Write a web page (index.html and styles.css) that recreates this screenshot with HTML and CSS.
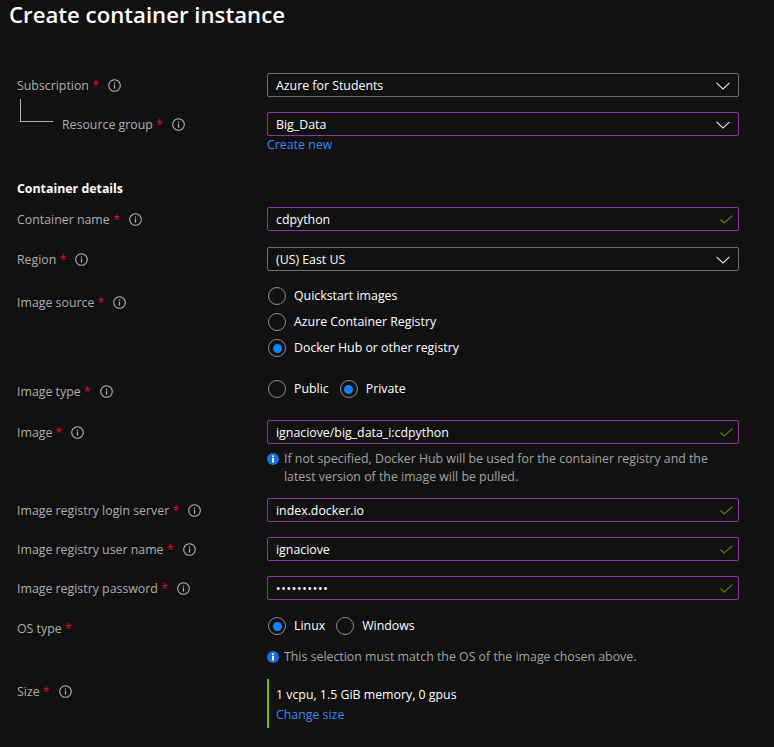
FILE: index.html

```html
<!DOCTYPE html>
<html lang="en">
<head>
  <meta charset="UTF-8">
  <meta name="viewport" content="width=device-width, initial-scale=1.0">
  <title>Create container instance</title>
  <link rel="stylesheet" href="styles.css">
</head>
<body>
  <svg class="defs" width="0" height="0">
    <symbol id="info" viewBox="0 0 13 13">
      <circle cx="6.5" cy="6.5" r="5.8" fill="none" stroke="currentColor" stroke-width="1.1"/>
      <rect x="5.9" y="5.6" width="1.2" height="4" fill="currentColor"/>
      <rect x="5.9" y="3.5" width="1.2" height="1.2" fill="currentColor"/>
    </symbol>
    <symbol id="info-fill" viewBox="0 0 12 12">
      <circle cx="6" cy="6" r="6" fill="#1a6fe0"/>
      <rect x="5.1" y="5" width="1.8" height="4.6" fill="#fff"/>
      <rect x="5.1" y="2.4" width="1.8" height="1.8" fill="#fff"/>
    </symbol>
    <symbol id="chevron" viewBox="0 0 14 8">
      <path d="M0.5 0.8 L7 7 L13.5 0.8" fill="none" stroke="#e4e4e4" stroke-width="1.1"/>
    </symbol>
    <symbol id="check" viewBox="0 0 13 9">
      <path d="M0.5 4.5 L4.2 8 L12.5 0.6" fill="none" stroke="#4a860a" stroke-width="1.2"/>
    </symbol>
  </svg>

  <h1 class="title">Create container instance</h1>

  <div class="form">
    <div class="row row-subscription">
      <div class="label">Subscription <span class="req">*</span><svg class="tip"><use href="#info"/></svg></div>
      <div class="field">Azure for Students<svg class="chevron"><use href="#chevron"/></svg></div>
    </div>

    <div class="row row-group">
      <div class="label label-sub"><span class="branch"></span>Resource group <span class="req">*</span><svg class="tip"><use href="#info"/></svg></div>
      <div>
        <div class="field active">Big_Data<svg class="chevron"><use href="#chevron"/></svg></div>
        <a class="link create-new" href="#">Create new</a>
      </div>
    </div>

    <h2 class="section">Container details</h2>

    <div class="row row-name">
      <div class="label">Container name <span class="req">*</span><svg class="tip"><use href="#info"/></svg></div>
      <div class="field active">cdpython<svg class="check"><use href="#check"/></svg></div>
    </div>

    <div class="row row-region">
      <div class="label">Region <span class="req">*</span><svg class="tip"><use href="#info"/></svg></div>
      <div class="field">(US) East US<svg class="chevron"><use href="#chevron"/></svg></div>
    </div>

    <div class="row row-source">
      <div class="label label-source">Image source <span class="req">*</span><svg class="tip"><use href="#info"/></svg></div>
      <div class="radio-stack">
        <div class="radio"><span class="dot"></span>Quickstart images</div>
        <div class="radio"><span class="dot"></span>Azure Container Registry</div>
        <div class="radio"><span class="dot on"></span>Docker Hub or other registry</div>
      </div>
    </div>

    <div class="row row-type">
      <div class="label">Image type <span class="req">*</span><svg class="tip"><use href="#info"/></svg></div>
      <div class="radio-line">
        <div class="radio"><span class="dot"></span>Public</div>
        <div class="radio"><span class="dot on"></span>Private</div>
      </div>
    </div>

    <div class="row row-image">
      <div class="label">Image <span class="req">*</span><svg class="tip"><use href="#info"/></svg></div>
      <div>
        <div class="field active">ignaciove/big_data_i:cdpython<svg class="check"><use href="#check"/></svg></div>
        <div class="note"><svg class="note-icon"><use href="#info-fill"/></svg><span>If not specified, Docker Hub will be used for the container registry and the latest version of the image will be pulled.</span></div>
      </div>
    </div>

    <div class="row row-login">
      <div class="label">Image registry login server <span class="req">*</span><svg class="tip"><use href="#info"/></svg></div>
      <div class="field active">index.docker.io<svg class="check"><use href="#check"/></svg></div>
    </div>

    <div class="row row-cred">
      <div class="label">Image registry user name <span class="req">*</span><svg class="tip"><use href="#info"/></svg></div>
      <div class="field active">ignaciove<svg class="check"><use href="#check"/></svg></div>
    </div>

    <div class="row row-cred">
      <div class="label">Image registry password <span class="req">*</span><svg class="tip"><use href="#info"/></svg></div>
      <div class="field active"><span class="secret">••••••••••</span><svg class="check"><use href="#check"/></svg></div>
    </div>

    <div class="row row-os">
      <div class="label label-os">OS type <span class="req">*</span></div>
      <div>
        <div class="radio-line">
          <div class="radio"><span class="dot on"></span>Linux</div>
          <div class="radio"><span class="dot"></span>Windows</div>
        </div>
        <div class="note note-os"><svg class="note-icon"><use href="#info-fill"/></svg><span>This selection must match the OS of the image chosen above.</span></div>
      </div>
    </div>

    <div class="row row-size">
      <div class="label">Size <span class="req">*</span><svg class="tip"><use href="#info"/></svg></div>
      <div class="size-box">
        <div>1 vcpu, 1.5 GiB memory, 0 gpus</div>
        <a class="link" href="#">Change size</a>
      </div>
    </div>
  </div>
</body>
</html>
```

FILE: styles.css

```css
* {
  box-sizing: border-box;
}
html, body {
  height: 100%;
}
body {
  margin: 0;
  background: #111111;
  color: #ffffff;
  font-family: "Open Sans", "Noto Sans", sans-serif;
  font-size: 12.35px;
  line-height: 18px;
  overflow: hidden;
}
.defs {
  display: block;
}
.title {
  margin: 0;
  padding-left: 9px;
  height: 30px;
  font-size: 22.2px;
  line-height: 29px;
  font-weight: 600;
}
.form {
  padding: 43px 0 0 17px;
}
.row {
  display: grid;
  grid-template-columns: 250px 472px;
  align-items: start;
}
.label {
  display: flex;
  align-items: center;
  height: 24px;
  padding-top: 1px;
  color: #adadad;
  white-space: pre;
}
.label-sub {
  padding-left: 45px;
  position: relative;
}
.branch {
  position: absolute;
  left: 3px;
  top: -13px;
  width: 33px;
  height: 23px;
  border-left: 1px solid #b0b0b0;
  border-bottom: 1px solid #b0b0b0;
}
.req {
  color: #e00b1c;
}
.tip {
  width: 13px;
  height: 13px;
  margin-left: 9px;
  color: #b4b4b4;
}
.field {
  display: flex;
  align-items: center;
  justify-content: space-between;
  height: 24px;
  padding: 1px 5px 0 8px;
  border: 1px solid #6e6e6e;
  border-radius: 2px;
  white-space: nowrap;
}
.field.active {
  border-color: #952fa8;
}
.chevron {
  width: 14px;
  height: 8px;
  margin-right: 3px;
}
.check {
  width: 13px;
  height: 9px;
}
.secret {
  font-size: 12px;
  letter-spacing: 0.75px;
}
.link {
  color: #3a86f5;
  text-decoration: none;
}
.create-new {
  display: block;
}
.section {
  margin: 26px 0 0;
  font-size: 12.35px;
  line-height: 18px;
  font-weight: 700;
}
.row-group {
  margin-top: 15px;
}
.row-name {
  margin-top: 9px;
}
.row-region {
  margin-top: 16px;
}
.row-source {
  margin-top: 16px;
}
.label-source {
  margin-top: 3px;
}
.radio-stack {
  display: flex;
  flex-direction: column;
  gap: 8px;
}
.radio-line {
  display: flex;
  gap: 11px;
}
.radio {
  display: flex;
  align-items: center;
  gap: 8px;
  height: 18px;
}
.dot {
  display: flex;
  align-items: center;
  justify-content: center;
  width: 18px;
  height: 18px;
  margin-left: 1px;
  border: 1px solid #8c8c8c;
  border-radius: 50%;
}
.radio-line .radio + .radio .dot {
  margin-left: 0;
}
.dot.on::after {
  content: "";
  width: 9px;
  height: 9px;
  border-radius: 50%;
  background: #0a84ff;
}
.row-type {
  margin-top: 23px;
}
.row-type .label {
  margin-top: -1px;
}
.row-image {
  margin-top: 17px;
}
.note {
  display: flex;
  gap: 5px;
  margin-top: 6px;
  color: #a3a3a3;
}
.note-icon {
  flex: none;
  width: 12px;
  height: 12px;
  margin-top: 3px;
}
.row-login {
  margin-top: 12px;
}
.row-cred {
  margin-top: 15px;
}
.row-os {
  margin-top: 17px;
}
.label-os {
  margin-top: -1px;
}
.note-os {
  margin-top: 13px;
}
.row-size {
  margin-top: 13px;
}
.size-box {
  height: 49px;
  padding: 6px 0 0 7px;
  border-left: 2px solid #7fba00;
  line-height: 20px;
}
```
